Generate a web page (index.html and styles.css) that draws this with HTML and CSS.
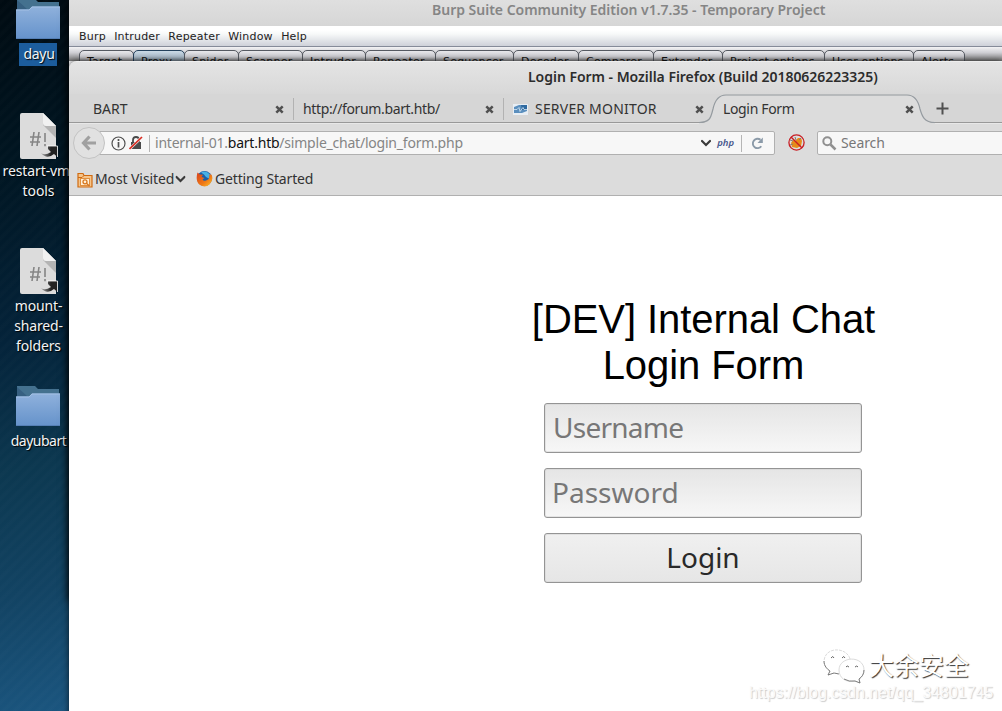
FILE: index.html
```html
<!DOCTYPE html>
<html lang="en">
<head>
<meta charset="utf-8">
<title>Login Form</title>
<link rel="stylesheet" href="styles.css">
</head>
<body>
<svg class="defs" width="0" height="0">
  <defs>
    <linearGradient id="fold" x1="0" y1="0" x2="0" y2="1"><stop offset="0" stop-color="#8fb1dc"/><stop offset="1" stop-color="#6693cb"/></linearGradient>
    <linearGradient id="arrow" x1="0" y1="0" x2="1" y2="0"><stop offset="0" stop-color="#aaa"/><stop offset=".6" stop-color="#222"/></linearGradient>
    <linearGradient id="fox" x1="0" y1="0" x2="1" y2="1"><stop offset="0" stop-color="#d8401c"/><stop offset=".6" stop-color="#ef7a16"/><stop offset="1" stop-color="#ffc52c"/></linearGradient>
    <symbol id="folder" viewBox="0 0 44 40">
      <path d="M1 0h18l3 3h21v12H1z" fill="#44718f"/><path d="M1 1l10 9H1z" fill="#376081"/>
      <path d="M0 10.500h13l3-3h28V39.500H0z" fill="url(#fold)"/><path d="M0 11h13l3-3h28" fill="none" stroke="#a3bfe4"/><path d="M0 39.500h44" stroke="#557fb5"/>
    </symbol>
    <symbol id="script" viewBox="0 0 38 46">
      <path d="M2 0h21l13 13v33H2q-2 0-2-2V2q0-2 2-2z" fill="#dcdcdc"/>
      <path d="M23 0v12l13 13V13z" fill="#b4b4b4"/><path d="M23 0v10q0 3 3 3h10z" fill="#f1f1f1"/>
      <path d="M14 19l-2 14M19 19l-2 14M10 24h11M10 29h10M25 20v9M25 31v2.300" fill="none" stroke="#858585" stroke-width="1.600"/>
      <path d="M21 40q4 3 10-1l-3-3V33h9.500v11l-3.500-3q-7 6-13-1z" fill="url(#arrow)"/><path d="M27 33h10.500v11" fill="none" stroke="#fff" stroke-width=".8"/>
    </symbol>
    <symbol id="close" viewBox="0 0 9 9"><path d="M1.300 1.300l6.400 6.400M7.700 1.300L1.300 7.700" stroke="#505050" stroke-width="2.500"/></symbol>
    <symbol id="chev" viewBox="0 0 10 8"><path d="M1 2l4 4 4-4" fill="none" stroke="#3a3a3a" stroke-width="2.200" stroke-linecap="round"/></symbol>
  </defs>
</svg>
<main class="desktop">
  <section class="icons">
    <div class="item first"><svg width="44" height="40"><use href="#folder"/></svg><span class="label picked">dayu</span></div>
    <div class="item restart"><svg width="38" height="46"><use href="#script"/></svg><span class="label">restart-vm-<br>tools</span></div>
    <div class="item mount"><svg width="38" height="46"><use href="#script"/></svg><span class="label">mount-<br>shared-<br>folders</span></div>
    <div class="item bart"><svg width="44" height="40"><use href="#folder"/></svg><span class="label">dayubart</span></div>
  </section>

  <section class="window burp">
    <header class="burp-title"><span>Burp Suite Community Edition v1.7.35 - Temporary Project</span></header>
    <nav class="burp-menu"><span>Burp</span><span>Intruder</span><span>Repeater</span><span>Window</span><span>Help</span></nav>
    <div class="burp-tabs">
      <span class="t55">Target</span><span class="t52 on">Proxy</span><span class="t55">Spider</span><span class="t65">Scanner</span><span class="t64">Intruder</span><span class="t71">Repeater</span><span class="t79">Sequencer</span><span class="t66">Decoder</span><span class="t76">Comparer</span><span class="t70">Extender</span><span class="t103">Project options</span><span class="t90">User options</span><span class="t53">Alerts</span>
    </div>
  </section>

  <section class="window firefox">
    <header class="ff-title"><span>Login Form - Mozilla Firefox (Build 20180626223325)</span></header>
    <div class="ff-tabs">
      <div class="tab one"><span class="tx-bart">BART</span><svg width="9" height="9"><use href="#close"/></svg></div>
      <div class="tab"><span class="tx-forum">http://forum.bart.htb/</span><svg width="9" height="9"><use href="#close"/></svg></div>
      <div class="tab three">
        <svg class="favicon" width="15" height="13" viewBox="0 0 15 13"><path d="M0 1h15v11H0z" fill="#e8eef4"/><path d="M1 4l5-2h8v6l-5 2H1z" fill="#5b8fbe"/><path d="M8 2h6v5H9z" fill="#2f6aa0"/><path d="M1 6.500h3l2-2 1 4 3-4 1 2h3" fill="none" stroke="#d8e7f3" stroke-width=".8"/></svg>
        <span class="tx-server">SERVER MONITOR</span><svg width="9" height="9"><use href="#close"/></svg></div>
      <div class="tab active">
        <svg class="shape" width="236" height="30" viewBox="0 0 236 30"><path d="M0 29C12 29 12 22 14 15Q17 1.500 27 1.500H208Q218 1.500 221 15C223 22 225 29 236 29V30H0z" fill="#dcdcdc"/><path d="M0 28.500C12 28.500 12 22 14 15Q17 1 27 1H208Q218 1 221 15C223 22 225 28.500 236 28.500" fill="none" stroke="#959ba0" stroke-width="1.200"/></svg>
        <span class="tx-login">Login Form</span><svg width="9" height="9"><use href="#close"/></svg></div>
      <svg class="plus" width="13" height="13"><path d="M6.500 .5v12M.5 6.500h12" stroke="#505050" stroke-width="2"/></svg>
    </div>
    <div class="ff-nav">
      <div class="back"><svg width="16" height="16" viewBox="0 0 16 16"><path d="M8.500 1.500L2.500 8l6 6.500M3 8h12" fill="none" stroke="#a0a0a0" stroke-width="3.200"/></svg></div>
      <div class="url">
        <svg width="15" height="15" viewBox="0 0 15 15"><circle cx="7.500" cy="7.500" r="6.500" fill="none" stroke="#505050" stroke-width="1.200"/><path d="M7.500 6v5.500M7.500 3v2" stroke="#505050" stroke-width="1.700"/></svg>
        <svg class="lock" width="14" height="14" viewBox="0 0 14 14"><path d="M2 6h10v7H2z" fill="#4a4a4a"/><path d="M4 7V4q0-3 3-3t3 3v3" fill="none" stroke="#4a4a4a" stroke-width="1.800"/><path d="M.5 13L13 1" stroke="#f4f4f4" stroke-width="2.600"/><path d="M.5 13L13 1" stroke="#d92b20" stroke-width="1.700"/></svg>
        <i class="bar"></i>
        <span class="address">internal-01.<b>bart.htb</b>/simple_chat/login_form.php</span>
        <svg class="drop" width="12" height="8" viewBox="0 0 10 8"><use href="#chev"/></svg>
        <em>php</em><i class="bar second"></i>
        <svg width="13" height="13" viewBox="0 0 13 13"><path d="M10.300 9.300A4.700 4.700 0 1 1 9.500 2.800" fill="none" stroke="#8b9aa8" stroke-width="1.900"/><path d="M11.800 .5v5.500H6.500z" fill="#8b9aa8"/></svg>
      </div>
      <svg class="foxy" width="17" height="17" viewBox="0 0 17 17"><path d="M3 9l2-3 2 1 3-3 3 0 1 3-1 5-4 2-5-1z" fill="#e78b18"/><path d="M2 6l3 1M7 3l1 3M13 4l-2 2M2 11l3-1" fill="none" stroke="#8b7a70"/><circle cx="8.500" cy="8.500" r="7.600" fill="none" stroke="#c91e24" stroke-width="1.300"/><path d="M3 3l11 11" stroke="#c91e24" stroke-width="1.400"/></svg>
      <div class="search"><svg width="15" height="15" viewBox="0 0 15 15"><circle cx="5.300" cy="5.300" r="4" fill="none" stroke="#919191" stroke-width="2"/><path d="M8.500 8.500l5 5" stroke="#919191" stroke-width="2.500"/></svg><span>Search</span></div>
    </div>
    <div class="bookmarks">
      <svg class="visit-icon" width="16" height="16" viewBox="0 0 16 16"><path d="M1 15V1.500h5l1 2h8V15z" fill="#f5c58c" stroke="#d06a10" stroke-width="1.200"/><path d="M1 5.500h4l2-2" fill="none" stroke="#d06a10"/><rect x="3.500" y="6.500" width="9" height="7" fill="#fff0d8" stroke="#e09040"/><circle cx="8" cy="9.800" r="2" fill="none" stroke="#d87820" stroke-width="1.300"/><path d="M9.500 11.300l3 3" stroke="#d87820" stroke-width="1.400"/></svg>
      <span class="visited">Most Visited</span>
      <svg class="vdrop" width="11" height="8" viewBox="0 0 10 8"><use href="#chev"/></svg>
      <svg class="fox" width="17" height="17" viewBox="0 0 17 17"><circle cx="8.500" cy="8.500" r="7.500" fill="#1b5fa8"/><path d="M5 2.500q5-2.500 9 2l-1 4-3-1.500-2-2.500z" fill="#48b1e4"/><path d="M1.500 2.500l2.500 2 3 .3-1.500 2.200 3 1-2 1.500q1 2 3.500 1t3-2l.5-4.500q1.500 1 2 .5Q18 10 13.500 14.500 9 18 4 15-1 11 1.500 2.500z" fill="url(#fox)"/></svg>
      <span class="started">Getting Started</span>
    </div>
    <div class="page">
      <form class="login">
        <h1>[DEV] Internal Chat<br>Login Form</h1>
        <div class="field"><span class="user">Username</span></div>
        <div class="field"><span class="pass">Password</span></div>
        <div class="field submit"><span class="go">Login</span></div>
      </form>
    </div>
  </section>

  <aside class="watermark">
    <div class="brand">
      <svg width="42" height="36" viewBox="0 0 42 36"><g fill="#fff" stroke="#ccc" stroke-width=".7"><path d="M27 11C24-1 2-2 1 13c0 5 3 8 6 10l-2 4 6-2 5 1" stroke-dasharray="3 1"/><path d="M16 22c0-14 25-15 25 0 0 4-2 7-5 9l1 4-5-2c-9 2-16-3-16-11z"/></g><path d="M1 13c0 5 3 8 6 10l-2 4 6-2 5 1M41 22c0 4-2 7-5 9l1 4-5-2q-6 1-11-2" fill="none" stroke="#666" stroke-width=".8"/><g fill="none" stroke="#666"><path d="M8 10q2-3 3 0M19 10q2-3 3 0M23 19q1-2 3 0M32 19q2-2 3 0"/></g></svg>
      <span>大余安全</span>
    </div>
    <span class="blog">https://blog.csdn.net/qq_34801745</span>
  </aside>
</main>
</body>
</html>
```
FILE: styles.css
```css
* { box-sizing: border-box; }
body { margin: 0; width: 1002px; height: 711px; overflow: hidden; font-family: "Noto Sans", sans-serif; }
svg { display: block; flex: none; }
.defs { position: absolute; }
.desktop {
  position: relative; width: 1002px; height: 711px; overflow: hidden;
  background: repeating-linear-gradient(135deg, rgba(255,255,255,.01) 0 2px, transparent 4px 6px, rgba(255,255,255,.01) 8px),
    linear-gradient(168deg, #000b12 0, #001521 22%, #04233a 47%, #0c3850 65%, #124363 82%, #1b5680 100%) 0 0 / 90px 711px no-repeat #114466;
}
/* Desktop icons and windows sit freely on the canvas. */
.item { position: absolute; left: -2px; width: 80px; display: flex; flex-direction: column; align-items: center; }
.first { top: -1px; }
.restart { top: 113px; }
.mount { top: 248px; }
.restart svg, .mount svg { margin-left: 2px; }
.bart { top: 386px; }
.label { color: #f2f4f5; font-size: 14px; line-height: 20px; text-align: center; white-space: nowrap; margin-top: 2px; text-shadow: 1px 1px 1px #000; }
.restart .label { letter-spacing: -.1px; padding-left: 1px; }
.mount .label { padding-left: 1px; letter-spacing: -.15px; }
.bart .label { margin-top: 5px; letter-spacing: -.5px; padding-left: 1px; }
.picked { background: #1c5d9d; width: 38px; height: 23px; line-height: 22px; margin-top: 4px; padding-left: 2px; letter-spacing: -.3px; }
.window { position: absolute; left: 69px; width: 933px; box-shadow: 0 0 8px 1px rgba(0,0,0,.8); }
.burp { top: 0; height: 600px; background: #f5f5f7; }
.burp-title { height: 26px; background: linear-gradient(#dfdfdf, #d6d6d6); padding-left: 363px; font: 600 14px/20px "Noto Sans", sans-serif; letter-spacing: -.01px; color: #858585; white-space: nowrap; }
.burp-menu { height: 21px; background: linear-gradient(#fff 20%, #f7f9f9 40%, #ced1d9); border-bottom: 1px solid #858b99; font: 11px/21px "DejaVu Sans", sans-serif; letter-spacing: .2px; color: #222; padding-left: 10px; display: flex; gap: 8.300px; }
.burp-tabs { display: flex; padding: 3px 0 0 10px; height: 14px; overflow: hidden; background: linear-gradient(#f3f3f5, #cfcfd4 40%, #777); }
.burp-tabs span { height: 22px; flex: none; margin-right: -1px; border: 1px solid #555961; border-radius: 5px 5px 0 0; font: 11px/21px "DejaVu Sans", sans-serif; letter-spacing: .2px; color: #111; padding-left: 7px; background: linear-gradient(#e8e8eb, #c7c7cc 30%, #777 55%); white-space: nowrap; }
.burp-tabs .on { border-color: #24415c; background: linear-gradient(#cbdbe7, #a9bac8 30%, #687580 55%); }
.t52 { width: 52px; } .t53 { width: 52px; } .t55 { width: 55px; } .t64 { width: 64px; } .t65 { width: 65px; } .t66 { width: 66px; } .t70 { width: 70px; } .t71 { width: 71px; } .t76 { width: 76px; } .t79 { width: 79px; } .t90 { width: 90px; } .t103 { width: 103px; }

.firefox { top: 61px; height: 660px; background: #dcdcdc; border-radius: 8px 0 0 0; overflow: hidden; box-shadow: 0 0 6px rgba(0,0,0,.7); display: flex; flex-direction: column; border-top: 1px solid #eee; }
.ff-title { height: 32px; flex: none; padding-left: 459px; font: 600 14px/30px "Noto Sans", sans-serif; letter-spacing: -.03px; color: #2c2c2c; white-space: nowrap; background: linear-gradient(#e4e4e4, #d8d8d8); }
.ff-tabs { height: 29px; flex: none; display: flex; position: relative; background: #d6d6d6; border-bottom: 1px solid #999; color: #333; font-size: 14px; white-space: nowrap; }
.tab { width: 210px; height: 22px; margin-top: 4px; padding: 0 9px; display: flex; align-items: center; justify-content: space-between; border-right: 1px solid #b2b2b2; line-height: 22px; }
.one { width: 225px; padding-left: 24px; }
.tx-forum { letter-spacing: -.36px; }
.tx-server { letter-spacing: .2px; }
.tx-login { letter-spacing: -.35px; }
.three { border: 0; width: 206px; justify-content: flex-start; padding-right: 6px; }
.three span { margin-left: 7px; }
.three svg:last-child { margin-left: auto; }
.active { border: 0; width: 206px; padding-left: 13px; padding-right: 2px; position: relative; }
.shape { position: absolute; left: -11px; top: -4px; }
.tab.active > :not(.shape) { position: relative; }
.plus { margin: 8px 0 0 20px; }
.ff-nav { height: 43px; flex: none; display: flex; border-top: 1px solid #e8e8e8; padding-top: 1px; }
.back { width: 32px; height: 32px; margin: 2px 0 0 4px; border: 1px solid #c3c3c3; border-radius: 50%; background: #e1e1e1; display: grid; place-items: center; z-index: 1; flex: none; }
.url { width: 676px; height: 24px; margin: 6px 0 0 -6px; padding-left: 11px; flex: none; border: 1px solid #b0b0b0; background: #f7f7f7; display: flex; align-items: center; border-radius: 0 2px 2px 0; font-size: 14px; color: #858585; white-space: nowrap; }
.lock { margin-left: 3px; }
.address { letter-spacing: -.22px; margin-top: -2px; }
.bar { width: 1px; height: 17px; background: #b5b5b5; margin: 0 5px 0 6px; }
.url b { font-weight: normal; color: #111; }
.drop { margin-left: auto; }
.url em { font: italic 600 9.500px/14px "Noto Sans", sans-serif; color: #46568c; margin-left: 5px; }
.bar.second { margin: 0 9px 0 7px; }
.url > svg:last-child { margin-right: 10px; }
.foxy { margin: 9px 0 0 13px; }
.search { flex: 1; margin: 6px -5px 0 12px; height: 24px; border: 1px solid #b0b0b0; border-radius: 2px; background: #f7f7f7; display: flex; align-items: center; padding-left: 4px; gap: 4px; font-size: 14px; color: #777; }
.search span { margin-top: -2px; letter-spacing: -.1px; }
.bookmarks { height: 30px; flex: none; display: flex; align-items: center; padding: 0 0 4px 8px; border-bottom: 1px solid #b0b0b0; font-size: 14px; color: #333; white-space: nowrap; }
.visited { margin-left: 2px; width: 80px; letter-spacing: -.1px; }
.visit-icon { position: relative; top: 1px; }
.fox { margin-left: 10px; }
.started { margin-left: 2px; letter-spacing: -.16px; }
.page { flex: 1; background: #fff; padding: 100px 0 0 454px; }
.login { width: 360px; margin: 0; display: flex; flex-direction: column; align-items: center; gap: 15px; }
.login h1 { margin: 0; color: #000; font: 40px/46px "Liberation Sans", sans-serif; letter-spacing: -.07px; text-align: center; white-space: nowrap; padding-left: 1px; }
.field { width: 318px; height: 50px; border: 1px solid #949494; border-radius: 3px; background: linear-gradient(#e5e5e5, #f7f7f7); box-shadow: inset 0 0 0 1px rgba(210,210,210,.5); font-size: 28px; line-height: 47px; color: #777; padding-left: 7px; }
.user { letter-spacing: -.75px; margin-left: 1px; }
.submit { background: linear-gradient(#f0f0f0, #e6e6e6); color: #292929; text-align: center; padding: 0; }
.watermark { position: absolute; right: 8px; top: 648px; width: 245px; display: flex; flex-direction: column; }
.brand { display: flex; align-items: center; height: 36px; padding-left: 74px; gap: 4px; font: 25px/32px "Noto Sans CJK SC", sans-serif; color: #fff; text-shadow: 1px 1px 1px #333; }
.brand span { margin-top: -4px; }
.blog { font: 16px/18px "Liberation Sans", sans-serif; letter-spacing: -.04px; color: #fafafa; text-shadow: 1px 1px 1px #ccc; white-space: nowrap; }
```
